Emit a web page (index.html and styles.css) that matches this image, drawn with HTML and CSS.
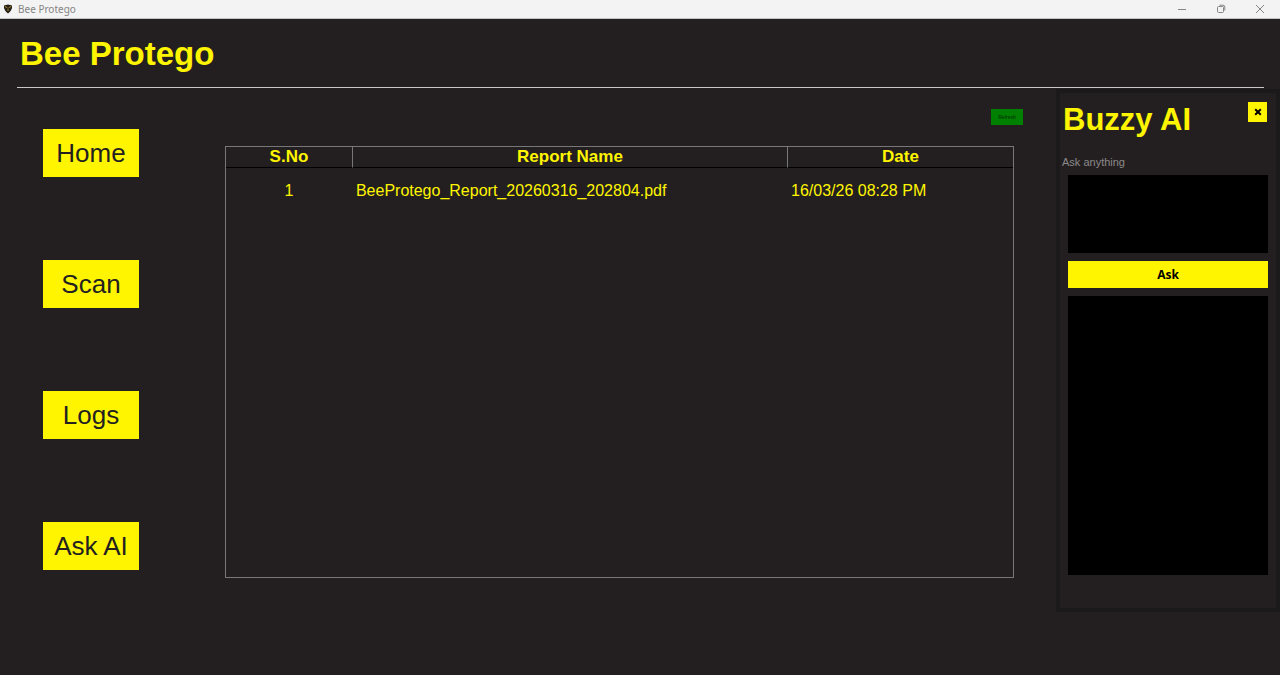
FILE: index.html
```html
<!DOCTYPE html>
<html lang="en">
<head>
    <meta charset="UTF-8">
    <meta name="viewport" content="width=device-width, initial-scale=1.0">
    <title>Bee Protego</title>
    <link rel="stylesheet" href="styles.css">
</head>
<body>
    <div class="titlebar">
        <svg class="app-icon" viewBox="0 0 10 10" aria-hidden="true">
            <path d="M5 0.5L9 1.5Q9.6 6 5 9.6Q0.4 6 1 1.5Z" fill="#242018"/>
            <path d="M1.8 2.4L4.4 3.8M8.2 2.4L5.6 3.8M5 4.6V7" stroke="#a58a2c" stroke-width="1" fill="none"/>
        </svg>
        <span class="titlebar-text">Bee Protego</span>
        <div class="window-controls">
            <button type="button" aria-label="Minimize">
                <svg viewBox="0 0 10 10"><path d="M1 5.5H9"/></svg>
            </button>
            <button type="button" aria-label="Restore">
                <svg viewBox="0 0 10 10"><rect x="1.5" y="2.5" width="6" height="6" rx="1"/><path d="M3.5 1.2H7Q8.8 1.2 8.8 3V6.5"/></svg>
            </button>
            <button type="button" aria-label="Close">
                <svg viewBox="0 0 10 10"><path d="M1 1L9 9M9 1L1 9"/></svg>
            </button>
        </div>
    </div>

    <header class="header">
        <h1>Bee Protego</h1>
    </header>

    <div class="layout">
        <nav class="sidebar">
            <button type="button">Home</button>
            <button type="button">Scan</button>
            <button type="button">Logs</button>
            <button type="button">Ask AI</button>
        </nav>

        <main class="content">
            <button type="button" class="refresh">Refresh</button>
            <div class="table-frame">
                <table class="reports">
                    <colgroup>
                        <col class="col-no">
                        <col class="col-name">
                        <col class="col-date">
                    </colgroup>
                    <thead>
                        <tr><th>S.No</th><th>Report Name</th><th>Date</th></tr>
                    </thead>
                    <tbody>
                        <tr><td class="number">1</td><td>BeeProtego_Report_20260316_202804.pdf</td><td>16/03/26 08:28 PM</td></tr>
                    </tbody>
                </table>
            </div>
        </main>

        <aside class="panel">
            <div class="panel-head">
                <h2>Buzzy AI</h2>
                <button type="button" class="close" aria-label="Close panel">
                    <svg viewBox="0 0 8 8"><path d="M1.2 1.2L6.8 6.8M6.8 1.2L1.2 6.8"/></svg>
                </button>
            </div>
            <label for="question">Ask anything</label>
            <textarea id="question" class="question"></textarea>
            <button type="button" class="ask">Ask</button>
            <textarea class="answer" aria-label="Answer" readonly></textarea>
        </aside>
    </div>
</body>
</html>
```

FILE: styles.css
```css
* {
    box-sizing: border-box;
}
body {
    margin: 0;
    min-height: 100vh;
    background: #231f20;
    color: #fff500;
    font-family: "Liberation Sans", Arial, sans-serif;
}
h1, h2 {
    margin: 0;
    font-weight: bold;
}
button {
    border: none;
    border-radius: 0;
    padding: 0;
    background: #fff500;
    color: #231f20;
    font-family: inherit;
    cursor: pointer;
}

/* Window title bar */
.titlebar {
    display: flex;
    align-items: center;
    height: 19px;
    padding: 0 6px 0 3px;
    background: #f3f3f3;
    border-bottom: 1px solid #c4c4c4;
}
.app-icon {
    width: 10px;
    height: 10px;
    margin-right: 5px;
}
.titlebar-text {
    color: #858585;
    font-family: "Noto Sans", sans-serif;
    font-size: 10px;
}
.window-controls {
    display: flex;
    gap: 11px;
    margin-left: auto;
}
.window-controls button {
    display: flex;
    justify-content: center;
    width: 28px;
    background: none;
}
.window-controls svg {
    width: 10px;
    height: 10px;
    fill: none;
    stroke: #858585;
    stroke-width: 1;
}

/* Header */
.header {
    margin: 0 16px 0 17px;
    padding: 16px 3px 14px;
    border-bottom: 1px solid #c8c6c6;
}
.header h1 {
    font-size: 33px;
    line-height: 38px;
}

.layout {
    display: grid;
    grid-template-columns: 225px 1fr 224px;
    align-items: start;
}

/* Navigation */
.sidebar {
    display: flex;
    flex-direction: column;
    gap: 83px;
    padding: 41px 0 0 43px;
}
.sidebar button {
    width: 96px;
    height: 48px;
    font-size: 26px;
}

/* Reports */
.content {
    display: flex;
    flex-direction: column;
    padding: 21px 33px 0 0;
}
.refresh {
    align-self: flex-end;
    width: 32px;
    height: 16px;
    background: #008000;
    color: #052a05;
    font-size: 5px;
}
.table-frame {
    min-height: 432px;
    margin: 21px 9px 0 0;
    border: 1px solid #777;
}
.reports {
    width: 100%;
    table-layout: fixed;
    border-collapse: separate;
    border-spacing: 0;
    font-size: 16px;
}
.col-no {
    width: 16%;
}
.col-date {
    width: 226px;
}
.reports th {
    height: 21px;
    padding: 0;
    border-left: 1px solid #777;
    border-bottom: 1px solid #000;
    font-size: 17px;
    line-height: 20px;
}
.reports th:first-child {
    border-left: none;
}
.reports td {
    height: 45px;
    padding: 0 4px;
}
.reports .number {
    text-align: center;
}

/* Assistant panel */
.panel {
    display: flex;
    flex-direction: column;
    margin-top: 1px;
    padding: 9px 8px 33px;
    border: 4px solid #1c191a;
}
.panel-head {
    display: flex;
    justify-content: space-between;
    align-items: flex-start;
    margin: 0 1px 0 -5px;
}
.panel-head h2 {
    font-size: 31px;
    line-height: 35px;
}
.close {
    display: flex;
    align-items: center;
    justify-content: center;
    width: 19px;
    height: 20px;
}
.close svg {
    width: 8px;
    height: 8px;
    stroke: #000;
    stroke-width: 2;
}
.panel label {
    margin: 18px 0 5px -6px;
    color: #8c898a;
    font-size: 11px;
    line-height: 15px;
}
.panel textarea {
    display: block;
    width: 100%;
    border: none;
    padding: 4px;
    background: #000;
    color: #fff500;
    font-family: inherit;
    resize: none;
}
.panel .question {
    height: 78px;
}
.ask {
    height: 27px;
    margin: 8px 0;
    color: #000;
    font-family: "Open Sans", sans-serif;
    font-size: 12px;
    font-weight: bold;
}
.panel .answer {
    height: 279px;
}
```
